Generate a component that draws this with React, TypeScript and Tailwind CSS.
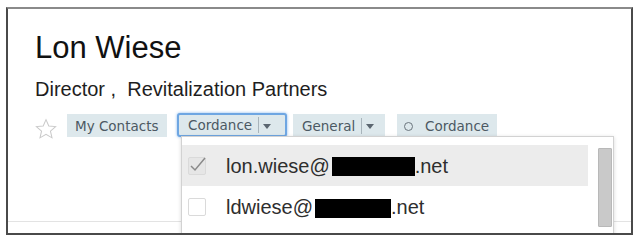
import React from "react";

function Star() {
  return (
    <svg width="22" height="22" viewBox="0 0 24 24" className="mt-[5px] shrink-0">
      <path
        d="M12 1.8l3.05 6.9 7.45.65-5.65 4.95 1.7 7.35L12 17.8l-6.55 3.85 1.7-7.35L1.5 9.35l7.45-.65z"
        fill="none"
        stroke="#c9c9c9"
        strokeWidth="1.1"
        strokeLinejoin="miter"
      />
    </svg>
  );
}

function Arrow() {
  return (
    <svg width="8" height="5" viewBox="0 0 8 5" className="shrink-0">
      <path d="M0 0h8L4 5z" fill="#5b6670" />
    </svg>
  );
}

function Check({ checked, shaded }: { checked?: boolean; shaded?: boolean }) {
  return (
    <div
      className={`relative w-[18px] h-[18px] shrink-0 border border-[#dadada] rounded-[2px] ${
        shaded ? "bg-[#e6e6e6]" : "bg-white"
      }`}
    >
      {checked && (
        <svg width="20" height="18" viewBox="0 0 20 18" className="absolute left-[-1px] top-[-2px]">
          <path d="M3 10l4 4L17 2" fill="none" stroke="#8a8a8a" strokeWidth="1.5" />
        </svg>
      )}
    </div>
  );
}

export default function App() {
  const tagText = "text-[13.5px] text-[#4c5963] leading-none whitespace-nowrap pt-[2px]";
  const tagFont = { fontFamily: '"DejaVu Sans", Verdana, sans-serif' };
  return (
    <div className="w-[640px] h-[243px] bg-white overflow-hidden">
      <div
        className="relative ml-[6px] mt-[7px] w-[627px] h-[228px] border-2 border-[#4a4a4a] border-t-[#8a8a8a] overflow-hidden bg-white"
        style={{ fontFamily: '"Liberation Sans", Arial, sans-serif' }}
      >
        <div className="pl-[27px]">
          <div className="mt-[23px] text-[31px] leading-[31px] text-[#111]">Lon Wiese</div>
          <div className="mt-[16px] text-[20px] leading-[20px] text-[#1e1e1e] whitespace-pre">
            {"Director ,  Revitalization Partners"}
          </div>
          <div className="mt-[14px] flex items-start h-[27px]" style={tagFont}>
            <Star />
            <div className="ml-[10px] mt-[1px] w-[100px] h-[23px] bg-[#dde8ec] flex items-center pl-[8px]">
              <span className={tagText}>My Contacts</span>
            </div>
            <div className="relative ml-[10px] w-[110px] h-[24px]">
              <div className="w-full h-full bg-[#dde8ec] border-2 border-[#6ea6e2] rounded-[3px] shadow-[0_0_3px_rgba(80,150,230,0.7)] flex items-center pl-[9px]">
                <span className={tagText}>Cordance</span>
                <div className="ml-[6px] w-px h-[16px] bg-[#a8b4bb]" />
                <div className="ml-[4px] pt-[2px]">
                  <Arrow />
                </div>
              </div>
              <div
                className="absolute left-[4px] top-[23px] z-10 w-[433px] h-[110px] bg-white border border-[#d2d2d2] shadow-[0_1px_4px_rgba(0,0,0,0.15)] pt-[8px]"
                style={{ fontFamily: '"Liberation Sans", Arial, sans-serif' }}
              >
                <div className="w-[406px] h-[41px] bg-[#ececec] flex items-center pl-[6px]">
                  <Check checked shaded />
                  <div className="ml-[20px] text-[20px] leading-none text-[#2e2e2e] flex items-center whitespace-nowrap">
                    <span>lon.wiese@</span>
                    <span className="inline-block w-[83px] h-[19px] bg-black mt-[2px] ml-[2px]" />
                    <span>.net</span>
                  </div>
                </div>
                <div className="w-[406px] h-[41px] flex items-center pl-[6px]">
                  <Check />
                  <div className="ml-[20px] text-[20px] leading-none text-[#2e2e2e] flex items-center whitespace-nowrap">
                    <span>ldwiese@</span>
                    <span className="inline-block w-[76px] h-[19px] bg-black mt-[3px] ml-[2px]" />
                    <span>.net</span>
                  </div>
                </div>
                <div className="absolute right-[1px] top-[11px] w-[14px] h-[79px] bg-[#c9c9c9] border border-[#b8b8b8] rounded-[1px]" />
              </div>
            </div>
            <div className="ml-[6px] mt-[1px] w-[92px] h-[23px] bg-[#dde8ec] flex items-center pl-[9px]">
              <span className={tagText}>General</span>
              <div className="ml-[6px] w-px h-[16px] bg-[#a8b4bb]" />
              <div className="ml-[4px] pt-[2px]">
                <Arrow />
              </div>
            </div>
            <div className="ml-[12px] mt-[1px] w-[100px] h-[23px] bg-[#dde8ec] flex items-center pl-[7px]">
              <div className="w-[9px] h-[9px] mt-[2px] rounded-full border border-[#6a747c] shrink-0" />
              <span className={`${tagText} ml-[12px]`}>Cordance</span>
            </div>
          </div>
        </div>
        <div className="mt-[81px] h-px bg-[#e3e3e3]" />
      </div>
    </div>
  );
}
